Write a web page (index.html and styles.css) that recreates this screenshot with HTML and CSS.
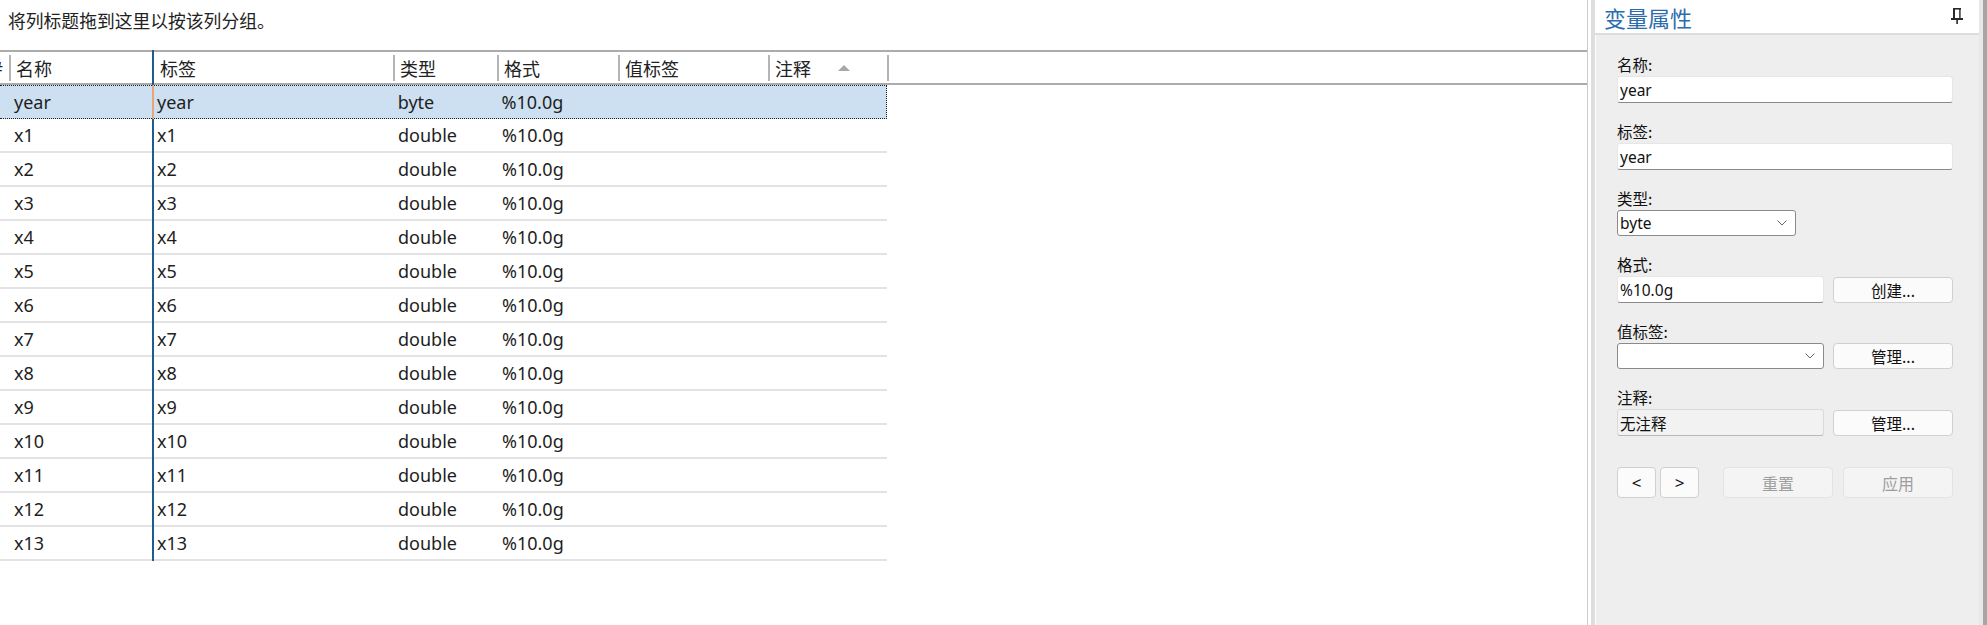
FILE: index.html
```html
<!DOCTYPE html>
<html lang="zh-CN">
<head>
<meta charset="utf-8">
<title>变量属性</title>
<link rel="stylesheet" href="styles.css">
</head>
<body>
<div class="app">
  <main class="main">
    <div class="group-hint">将列标题拖到这里以按该列分组。</div>
    <div class="grid">
      <div class="frozen">
        <div class="hdr">
          <div class="hc c-num">#</div>
          <div class="hc c-name sep">名称</div>
        </div>
        <div class="row sel"><div class="cell c-num"></div><div class="cell c-name">year</div></div>
        <div class="row"><div class="cell c-num"></div><div class="cell c-name">x1</div></div>
        <div class="row"><div class="cell c-num"></div><div class="cell c-name">x2</div></div>
        <div class="row"><div class="cell c-num"></div><div class="cell c-name">x3</div></div>
        <div class="row"><div class="cell c-num"></div><div class="cell c-name">x4</div></div>
        <div class="row"><div class="cell c-num"></div><div class="cell c-name">x5</div></div>
        <div class="row"><div class="cell c-num"></div><div class="cell c-name">x6</div></div>
        <div class="row"><div class="cell c-num"></div><div class="cell c-name">x7</div></div>
        <div class="row"><div class="cell c-num"></div><div class="cell c-name">x8</div></div>
        <div class="row"><div class="cell c-num"></div><div class="cell c-name">x9</div></div>
        <div class="row"><div class="cell c-num"></div><div class="cell c-name">x10</div></div>
        <div class="row"><div class="cell c-num"></div><div class="cell c-name">x11</div></div>
        <div class="row"><div class="cell c-num"></div><div class="cell c-name">x12</div></div>
        <div class="row"><div class="cell c-num"></div><div class="cell c-name">x13</div></div>
      </div>
      <div class="scroll">
        <div class="hdr">
          <div class="hc c-label">标签</div>
          <div class="hc c-type sep">类型</div>
          <div class="hc c-fmt sep">格式</div>
          <div class="hc c-vl sep">值标签</div>
          <div class="hc c-note sep">注释<span class="sort"></span></div>
        </div>
        <div class="row sel"><div class="cell c-label">year</div><div class="cell c-type">byte</div><div class="cell c-fmt">%10.0g</div><div class="cell c-vl"></div><div class="cell c-note"></div></div>
        <div class="row"><div class="cell c-label">x1</div><div class="cell c-type">double</div><div class="cell c-fmt">%10.0g</div><div class="cell c-vl"></div><div class="cell c-note"></div></div>
        <div class="row"><div class="cell c-label">x2</div><div class="cell c-type">double</div><div class="cell c-fmt">%10.0g</div><div class="cell c-vl"></div><div class="cell c-note"></div></div>
        <div class="row"><div class="cell c-label">x3</div><div class="cell c-type">double</div><div class="cell c-fmt">%10.0g</div><div class="cell c-vl"></div><div class="cell c-note"></div></div>
        <div class="row"><div class="cell c-label">x4</div><div class="cell c-type">double</div><div class="cell c-fmt">%10.0g</div><div class="cell c-vl"></div><div class="cell c-note"></div></div>
        <div class="row"><div class="cell c-label">x5</div><div class="cell c-type">double</div><div class="cell c-fmt">%10.0g</div><div class="cell c-vl"></div><div class="cell c-note"></div></div>
        <div class="row"><div class="cell c-label">x6</div><div class="cell c-type">double</div><div class="cell c-fmt">%10.0g</div><div class="cell c-vl"></div><div class="cell c-note"></div></div>
        <div class="row"><div class="cell c-label">x7</div><div class="cell c-type">double</div><div class="cell c-fmt">%10.0g</div><div class="cell c-vl"></div><div class="cell c-note"></div></div>
        <div class="row"><div class="cell c-label">x8</div><div class="cell c-type">double</div><div class="cell c-fmt">%10.0g</div><div class="cell c-vl"></div><div class="cell c-note"></div></div>
        <div class="row"><div class="cell c-label">x9</div><div class="cell c-type">double</div><div class="cell c-fmt">%10.0g</div><div class="cell c-vl"></div><div class="cell c-note"></div></div>
        <div class="row"><div class="cell c-label">x10</div><div class="cell c-type">double</div><div class="cell c-fmt">%10.0g</div><div class="cell c-vl"></div><div class="cell c-note"></div></div>
        <div class="row"><div class="cell c-label">x11</div><div class="cell c-type">double</div><div class="cell c-fmt">%10.0g</div><div class="cell c-vl"></div><div class="cell c-note"></div></div>
        <div class="row"><div class="cell c-label">x12</div><div class="cell c-type">double</div><div class="cell c-fmt">%10.0g</div><div class="cell c-vl"></div><div class="cell c-note"></div></div>
        <div class="row"><div class="cell c-label">x13</div><div class="cell c-type">double</div><div class="cell c-fmt">%10.0g</div><div class="cell c-vl"></div><div class="cell c-note"></div></div>
      </div>
      <div class="filler">
        <div class="hdr"><div class="hc c-fill sep"></div></div>
      </div>
    </div>
  </main>
  <div class="splitter"></div>
  <aside class="panel">
    <div class="panel-head">
      <span class="panel-title">变量属性</span>
      <svg class="pin" width="12" height="16" viewBox="0 0 12 16" aria-hidden="true">
        <rect x="2" y="0" width="8" height="1.6" fill="#2a2a2a"/>
        <rect x="2" y="0" width="2" height="11" fill="#2a2a2a"/>
        <rect x="8.2" y="0" width="1.4" height="11" fill="#2a2a2a"/>
        <rect x="0" y="10" width="12" height="2" fill="#2a2a2a"/>
        <rect x="5.3" y="12" width="1.6" height="4" fill="#2a2a2a"/>
      </svg>
    </div>
    <div class="panel-body">
      <div class="field">
        <div class="flabel">名称:</div>
        <div class="input full">year</div>
      </div>
      <div class="field">
        <div class="flabel">标签:</div>
        <div class="input full">year</div>
      </div>
      <div class="field">
        <div class="flabel">类型:</div>
        <div class="select w-type"><span>byte</span><svg class="chev" width="10" height="6" viewBox="0 0 10 6"><polyline points="0.5,0.5 5,5 9.5,0.5" fill="none" stroke="#666" stroke-width="1"/></svg></div>
      </div>
      <div class="field">
        <div class="flabel">格式:</div>
        <div class="ctrl-row">
          <div class="input half">%10.0g</div>
          <button class="btn side">创建...</button>
        </div>
      </div>
      <div class="field">
        <div class="flabel">值标签:</div>
        <div class="ctrl-row">
          <div class="select half"><span></span><svg class="chev" width="10" height="6" viewBox="0 0 10 6"><polyline points="0.5,0.5 5,5 9.5,0.5" fill="none" stroke="#666" stroke-width="1"/></svg></div>
          <button class="btn side">管理...</button>
        </div>
      </div>
      <div class="field">
        <div class="flabel">注释:</div>
        <div class="ctrl-row">
          <div class="input half readonly">无注释</div>
          <button class="btn side">管理...</button>
        </div>
      </div>
      <div class="nav">
        <button class="btn nb">&lt;</button>
        <button class="btn nb">&gt;</button>
        <button class="btn wide first disabled">重置</button>
        <button class="btn wide disabled">应用</button>
      </div>
    </div>
  </aside>
</div>
</body>
</html>
```

FILE: styles.css
```css
* { box-sizing: border-box; }
html, body { margin: 0; padding: 0; }
body {
  background: #fff;
  font-family: "Noto Sans", "Noto Sans CJK SC", sans-serif;
  color: #1e1e1e;
  overflow: hidden;
}
.app { display: flex; width: 1987px; height: 625px; }

/* ---------- main grid area ---------- */
.main {
  width: 1588px;
  flex: none;
  border-right: 1px solid #cbcbcb;
  display: flex;
  flex-direction: column;
}
.group-hint {
  height: 50px;
  padding: 8px 0 0 8px;
  font-family: "Noto Sans CJK SC", sans-serif;
  font-size: 17.8px;
  line-height: 25px;
  color: #222;
}
.grid { display: flex; align-items: flex-start; }
.frozen { width: 152px; flex: none; }
.scroll { width: 735px; flex: none; border-left: 2px solid #1e5b8f; }
.filler { flex: 1; }

.hdr {
  display: flex;
  height: 35px;
  border-top: 2px solid #acacac;
  border-bottom: 2px solid #acacac;
}
.hc {
  display: flex;
  align-items: center;
  font-size: 18px;
  color: #222;
  white-space: nowrap;
  overflow: hidden;
  flex: none;
}
.hc.sep::before {
  content: "";
  flex: none;
  width: 2px;
  height: 26px;
  background: #b4b4b4;
  margin-right: 5px;
}
.hc.c-num { justify-content: flex-end; padding-right: 6px; }
.hc.c-label { padding-left: 6px; }
.hc.c-fill { flex: 1; }
.sort {
  width: 0;
  height: 0;
  margin-left: auto;
  margin-right: 37px;
  border-left: 6.5px solid transparent;
  border-right: 6.5px solid transparent;
  border-bottom: 6px solid #a8a8a8;
}

.c-num { width: 9px; }
.c-name { width: 143px; }
.c-label { width: 239px; }
.c-type { width: 104px; }
.c-fmt { width: 121px; }
.c-vl { width: 150px; }
.c-note { width: 119px; }

.row {
  display: flex;
  height: 34px;
  border-bottom: 2px solid #e3e3e3;
}
.cell {
  display: flex;
  align-items: center;
  padding-left: 5px;
  font-size: 18px;
  color: #1e1e1e;
  white-space: nowrap;
  overflow: hidden;
  flex: none;
}
.cell.c-num { padding-left: 0; }
.cell.c-label { padding-left: 3px; }
.row.sel {
  background: #cde0f1;
  border-top: 1px dotted #222;
  border-bottom: 1px dotted #222;
}
.scroll .row.sel {
  margin-left: -2px;
  border-left: 2px solid #e9a47a;
  border-right: 1px dotted #222;
}
.scroll .row.sel .cell { flex-shrink: 1; }

/* ---------- splitter ---------- */
.splitter {
  width: 7px;
  flex: none;
  background: #fff;
  border-right: 4px solid #dedede;
}

/* ---------- property panel ---------- */
.panel {
  width: 392px;
  flex: none;
  display: flex;
  flex-direction: column;
  background: #e8e8e8;
  padding-right: 4px;
  border-right: 4px solid #a6a6a6;
}
.panel-head {
  height: 35px;
  flex: none;
  background: #fff;
  border-bottom: 2px solid #dcdcdc;
  display: flex;
  align-items: center;
  justify-content: space-between;
  padding: 0 16px 0 9px;
}
.panel-title {
  font-family: "Noto Sans CJK SC", sans-serif;
  font-size: 22px;
  line-height: 26px;
  color: #2b6cae;
}
.pin { display: block; margin-top: -2px; }

.panel-body {
  flex: 1;
  background: #eeeeee;
  border-left: 1px solid #fff;
  padding: 19px 0 0 21px;
}
.field + .field { margin-top: 18px; }
.flabel {
  font-family: "Noto Sans CJK SC", sans-serif;
  font-size: 15.5px;
  line-height: 21px;
  margin-bottom: 1px;
  color: #111;
}
.input {
  height: 27px;
  display: flex;
  align-items: center;
  padding: 0 2px;
  background: #fff;
  border: 1px solid #e6e6e6;
  border-bottom-color: #8a8a8a;
  border-radius: 3px;
  font-size: 15.5px;
  color: #111;
  white-space: nowrap;
}
.input.full { width: 336px; }
.input.half { width: 207px; }
.input.readonly {
  background: #f2f2f2;
  border-color: #dadada;
  border-bottom-color: #b8b8b8;
  font-family: "Noto Sans CJK SC", sans-serif;
  font-size: 15.5px;
}
.select {
  height: 26px;
  display: flex;
  align-items: center;
  justify-content: space-between;
  padding: 0 8px 0 2px;
  background: #fff;
  border: 1px solid #8a8a8a;
  border-radius: 3px;
  font-size: 15.5px;
  color: #111;
}
.select.w-type { width: 179px; }
.select.half { width: 207px; }
.chev { display: block; flex: none; }

.ctrl-row {
  display: flex;
  align-items: center;
  gap: 9px;
  width: 336px;
}
.btn {
  font-family: "Noto Sans CJK SC", sans-serif;
  font-size: 15.5px;
  color: #111;
  background: #fbfbfb;
  border: 1px solid #d0d0d0;
  border-radius: 4px;
  padding: 0;
  margin: 0;
}
.btn.side { width: 120px; height: 26px; }
.nav {
  display: flex;
  gap: 4px;
  margin-top: 31px;
}
.btn.nb { width: 39px; height: 31px; font-family: "Noto Sans", sans-serif; font-size: 17px; }
.btn.wide { width: 110px; height: 31px; margin-left: 6px; font-size: 16px; }
.btn.wide.first { margin-left: 20px; }
.btn.disabled {
  background: #f4f4f4;
  border-color: #e3e3e3;
  color: #9e9e9e;
}
```
